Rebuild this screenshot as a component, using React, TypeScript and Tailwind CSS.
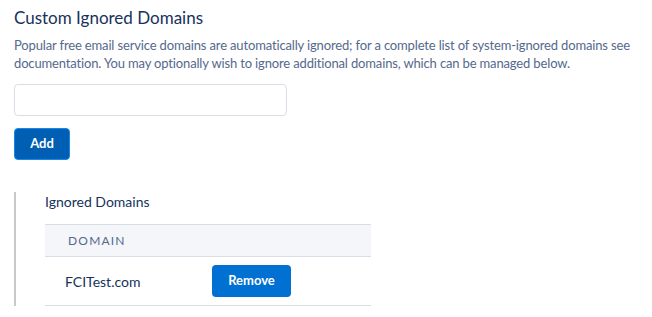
export default function App() {
  return (
    <div className="w-[652px] h-[317px] bg-white font-['Lato',sans-serif] pl-[14px] pt-[6px]">
      <h1 className="text-[17px] leading-[24px] text-[#16325c]">Custom Ignored Domains</h1>
      <p className="mt-[6px] text-[13px] tracking-[-0.15px] leading-[18px] text-[#54698d] w-[636px]">
        Popular free email service domains are automatically ignored; for a complete list of system-ignored domains see
        documentation. You may optionally wish to ignore additional domains, which can be managed below.
      </p>
      <input
        type="text"
        className="mt-[12px] block w-[273px] h-[32px] border border-[#d8dde6] rounded-[4px] bg-white"
      />
      <button className="mt-[12px] block w-[56px] h-[32px] rounded-[4px] bg-[#005fb2] border border-[#1589ee] text-white text-[13px] font-bold">
        Add
      </button>
      <div className="mt-[32px] border-l-2 border-[#c9c9c9] pl-[29px] w-[357px]">
        <div className="text-[14px] leading-[18px] text-[#16325c] pt-[1px]">Ignored Domains</div>
        <div className="mt-[13px] h-[33px] bg-[#f4f6f9] border-y border-[#d8dde6] flex items-center pl-[23px] text-[12px] tracking-[0.1em] text-[#54698d]">
          DOMAIN
        </div>
        <div className="h-[49px] border-b border-[#d8dde6] flex items-center pl-[20px]">
          <div className="w-[147px] shrink-0 text-[14px] text-[#16325c]">FCITest.com</div>
          <button className="w-[79px] h-[32px] rounded-[4px] bg-[#0070d2] text-white text-[13px] font-bold">
            Remove
          </button>
        </div>
      </div>
    </div>
  )
}
